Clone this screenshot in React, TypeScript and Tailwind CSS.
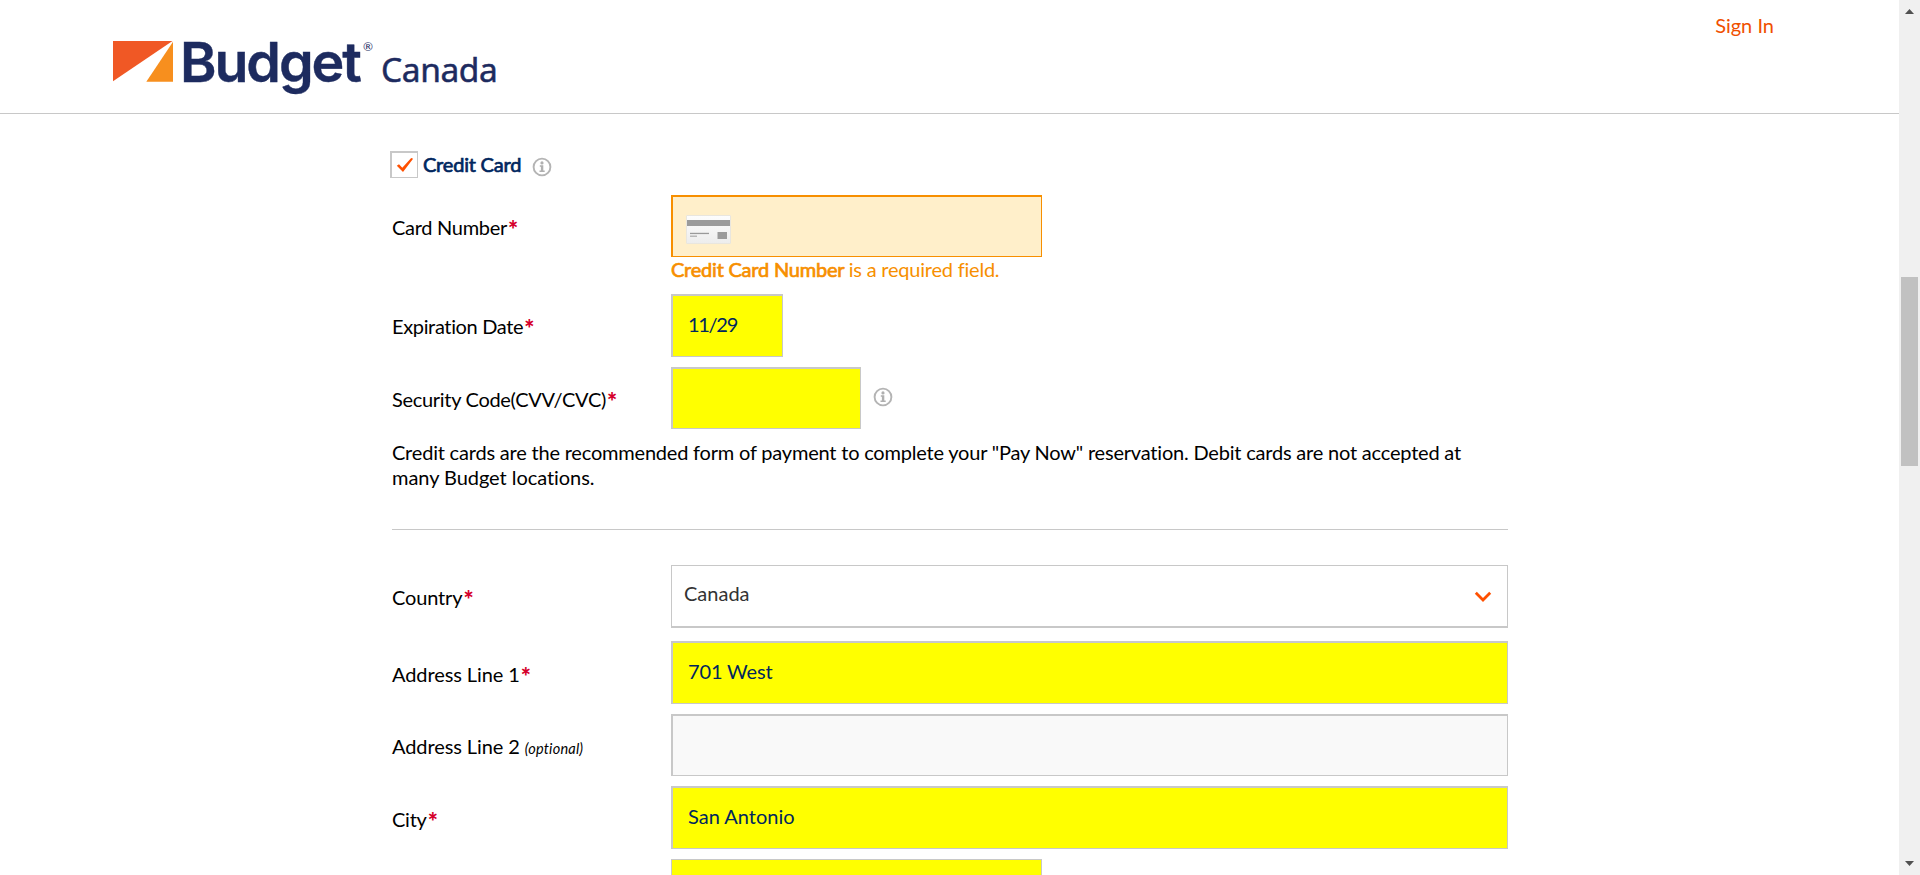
import type { ReactNode } from "react";

function InfoIcon() {
  return (
    <svg width="20" height="20" viewBox="0 0 20 20" className="block shrink-0">
      <circle cx="10" cy="10" r="8.4" fill="none" stroke="#b4b4b4" strokeWidth="1.9" />
      <circle cx="10" cy="5.9" r="1.6" fill="#b0b0b0" />
      <path d="M7.8 8.2h3.5v5.3h1.4v1.5H7.5v-1.5h1.4V9.7H7.8z" fill="#b0b0b0" />
    </svg>
  );
}

function CardIcon() {
  return (
    <svg width="45" height="29" viewBox="0 0 45 29" className="block">
      <defs>
        <linearGradient id="card" x1="0" y1="0" x2="0" y2="1">
          <stop offset="0" stopColor="#fdfdfd" />
          <stop offset="1" stopColor="#ededed" />
        </linearGradient>
      </defs>
      <rect x="0.5" y="0.5" width="44" height="28" rx="0.5" fill="url(#card)" stroke="#e9e6de" />
      <rect x="1" y="5" width="43" height="6" fill="#9b9b9b" />
      <rect x="4" y="17.8" width="19" height="1.3" fill="#9a9a9a" />
      <rect x="4" y="20.6" width="7" height="1.2" fill="#a8a8a8" />
      <rect x="31.5" y="17" width="9.5" height="7" fill="#9b9b9b" />
    </svg>
  );
}

function Row({ label, tracking, className, labelTop = "pt-5", optional, children }: {
  label: string;
  tracking: string;
  className: string;
  labelTop?: string;
  optional?: boolean;
  children: ReactNode;
}) {
  return (
    <div className={`flex items-start ${className}`}>
      <label className={`flex w-[279px] shrink-0 whitespace-nowrap text-black ${labelTop}`}>
        <span className={tracking}>{label}</span>
        {optional ? (
          <i className="ml-[5px] pt-[3px] text-[14.5px] tracking-[0.2px]">(optional)</i>
        ) : (
          <span className="ml-px pt-[3px] text-[24px] font-black text-[#d5002b]">*</span>
        )}
      </label>
      {children}
    </div>
  );
}

const box = "block border border-t-2 border-l-2 pr-4 pl-[15px] pb-1 text-[#00265e] outline-none";

export default function App() {
  return (
    <div className="flex h-[875px] w-[1920px] overflow-hidden bg-white font-['Lato',sans-serif] text-[20px] leading-6">
      <div className="w-[1899px] shrink-0">
        <header className="flex h-[114px] items-start justify-between border-b border-[#c8c8c8] pr-[125px] pl-[113px]">
          <div className="flex items-start text-[#1d2b5f]">
            <svg width="61" height="42" viewBox="0 0 61 42" className="mt-[41px] block">
              <path d="M0 0h59.5L0 40.3z" fill="#f05825" />
              <path d="M60 0.8v40H33.3z" fill="#f78f1e" />
            </svg>
            <span className="mt-[29px] ml-[6px] w-[181px] font-['Inter',sans-serif] text-[55.5px] leading-[66px] font-semibold tracking-[-2.1px] [-webkit-text-stroke:0.4px]">
              Budget
            </span>
            <span className="mt-[41px] ml-[2px] w-[18px] text-[12px] leading-3">®</span>
            <span className="mt-[48px] font-['Noto_Sans',sans-serif] text-[33.5px] leading-[42px] tracking-[-0.4px] [-webkit-text-stroke:0.5px]">Canada</span>
          </div>
          <a className="mt-[13px] text-[#f05000]">Sign In</a>
        </header>

        <main className="ml-[392px] w-[1116px]">
          <div className="-ml-[2px] flex pt-[37px]">
            <span className="flex h-[27px] w-[28px] items-center justify-center border border-t-2 border-l-2 border-[#c8c8c8]">
              <svg width="18" height="16" viewBox="0 0 18 16" className="block">
                <path d="M0.8 8.7 3 7.2l3.3 3.6L15.2 1l1.9.7L7 15z" fill="#ff5000" />
              </svg>
            </span>
            <span className="mt-px -mb-px ml-[5px] w-[109px] tracking-[-0.2px] text-[#00265e] [-webkit-text-stroke:0.7px]">Credit Card</span>
            <span className="mt-[6px] -mb-px"><InfoIcon /></span>
          </div>

          <Row label="Card Number" tracking="tracking-[-0.3px]" className="mt-[17px] h-[62px]">
            <div className="h-[62px] w-[371px] border border-t-2 border-l-2 border-[#f78f00] bg-[#ffefca] pt-[18px] pl-[13px]">
              <CardIcon />
            </div>
          </Row>
          <p className="ml-[279px] h-[37px] tracking-[-0.22px] text-[#f78f00]">
            <span className="[-webkit-text-stroke:0.7px]">Credit Card Number</span> is a required field.
          </p>

          <Row label="Expiration Date" tracking="tracking-[-0.35px]" className="h-[63px]">
            <input className={`${box} h-[63px] w-[112px] border-[#c8c8c8] bg-[#ffff00] tracking-[-1.3px]`} defaultValue="11/29" />
          </Row>

          <Row label="Security Code(CVV/CVC)" tracking="tracking-[-0.3px]" className="mt-[10px] h-[62px]">
            <input className={`${box} h-[62px] w-[190px] border-[#c8c8c8] bg-[#ffff00]`} />
            <span className="mt-5 ml-3"><InfoIcon /></span>
          </Row>

          <p className="mt-[11px] h-[50px] leading-[25px] tracking-[-0.2px] whitespace-nowrap text-black">
            Credit cards are the recommended form of payment to complete your "Pay Now" reservation. Debit cards are not accepted at
            <br />
            <span className="tracking-[-0.05px]">many Budget locations.</span>
          </p>
          <hr className="mt-[39px] border-[#c8c8c8]" />

          <Row label="Country" tracking="tracking-[-0.15px]" className="mt-[35px] h-[63px]">
            <div className="flex h-[63px] w-[837px] items-start justify-between border border-b-2 border-[#c8c8c8] pt-[15px] pr-[15px] pl-[12px] text-[#333333]">
              <span>Canada</span>
              <svg width="18" height="12" viewBox="0 0 18 12" className="mt-[10px] block">
                <path d="M1.8 1.8 9 9l7.2-7.2" fill="none" stroke="#ff5000" strokeWidth="2.8" />
              </svg>
            </div>
          </Row>

          <Row label="Address Line 1" tracking="tracking-[-0.1px]" className="mt-[13px] h-[63px]" labelTop="pt-[21px]">
            <input className={`${box} h-[63px] w-[837px] border-[#c8c8c8] bg-[#ffff00] tracking-[-0.15px]`} defaultValue="701 West" />
          </Row>

          <Row label="Address Line 2" tracking="tracking-[-0.1px]" className="mt-[10px] h-[62px]" optional>
            <input className={`${box} h-[62px] w-[837px] border-[#c8c8c8] bg-[#f9f9f9]`} />
          </Row>

          <Row label="City" tracking="tracking-[-0.25px]" className="mt-[10px] h-[63px]" labelTop="pt-[21px]">
            <input className={`${box} h-[63px] w-[837px] border-[#c8c8c8] bg-[#ffff00]`} defaultValue="San Antonio" />
          </Row>

          <div className="mt-[10px] ml-[279px] h-[63px] w-[371px] border border-[#c8c8c8] bg-[#ffff00]" />
        </main>
      </div>

      <aside className="flex h-full w-[21px] flex-col items-center bg-[#f0f0f0] pt-[9px] pb-[9px]">
        <svg width="9" height="5" viewBox="0 0 9 5" className="block"><path d="M0 5 4.5 0 9 5z" fill="#505050" /></svg>
        <div className="mt-[263px] h-[189px] w-[17px] bg-[#c1c1c1]" />
        <svg width="9" height="5" viewBox="0 0 9 5" className="mt-auto block"><path d="M0 0 4.5 5 9 0z" fill="#505050" /></svg>
      </aside>
    </div>
  );
}
